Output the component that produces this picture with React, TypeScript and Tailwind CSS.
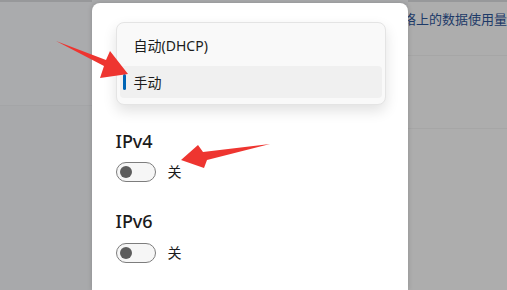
export default function App() {
  const cjk = "font-['Noto_Sans','Noto_Sans_CJK_SC',sans-serif]";
  const Toggle = () => (
    <div className="flex items-center">
      <div className="relative h-[20px] w-[40px] rounded-full border border-[#7d7d7d] bg-[#f6f6f6]">
        <div className="absolute left-[3px] top-[3px] h-[12px] w-[12px] rounded-full bg-[#5d5d5d]" />
      </div>
      <span className="ml-[12px] text-[14px] leading-[20px] text-[#1b1b1b]">关</span>
    </div>
  );
  return (
    <div className={`relative flex h-[290px] w-[507px] overflow-hidden bg-[#a9aaac] ${cjk}`}>
      <div className="flex w-[92px] flex-col border-t-2 border-[#97989a]">
        <div className="h-[104px] border-b border-[#a4a5a7] bg-[#aaabad]" />
        <div className="flex-1 bg-[#a8a9ab]" />
      </div>
      <div className="z-10 mt-[3px] flex w-[318px] flex-col rounded-t-[8px] bg-white pl-[24px] shadow-[0_0_5px_rgba(0,0,0,0.18)]">
        <div className="mt-[19px] w-[270px] rounded-[8px] border border-[#e4e4e4] bg-[#f9f9f9] px-[3px] pb-[6px] pt-[4px] shadow-[0_6px_14px_rgba(0,0,0,0.12)]">
          <div className="flex h-[36px] items-center pl-[14px] text-[14px] text-[#1b1b1b]">自动(DHCP)</div>
          <div className="relative mt-[3px] flex h-[32px] items-center rounded-[4px] bg-[#f0f0f0] pl-[14px] text-[14px] text-[#1b1b1b]">
            <span className="absolute left-[3px] top-[8px] h-[16px] w-[3px] rounded-full bg-[#0064b4]" />
            手动
          </div>
        </div>
        <div className="mt-[24px] text-[18px] font-medium leading-[24px] text-[#1b1b1b]">IPv4</div>
        <div className="mt-[9px]">
          <Toggle />
        </div>
        <div className="mt-[27px] text-[18px] font-medium leading-[24px] text-[#1b1b1b]">IPv6</div>
        <div className="mt-[10px]">
          <Toggle />
        </div>
      </div>
      <div className="flex flex-1 flex-col border-t-2 border-[#97989a] bg-[#adadad]">
        <div className="ml-[-5px] h-[53px] whitespace-nowrap pt-[8px] text-[13px] leading-[18px] text-[#1d3a68]">络上的数据使用量</div>
        <div className="h-[73px] border-t border-[#a6a6a6]" />
        <div className="flex-1 border-t border-[#a6a6a6]" />
      </div>
      <svg className="pointer-events-none absolute inset-0 z-20" width="507" height="290" viewBox="0 0 507 290">
        <polygon points="56,41 106,60 110,51 128,74 100,78 104,66" fill="#ee3530" />
        <polygon points="270,144 203,152 198,145 181,160 204,168 207,160" fill="#ee3530" />
      </svg>
    </div>
  );
}
